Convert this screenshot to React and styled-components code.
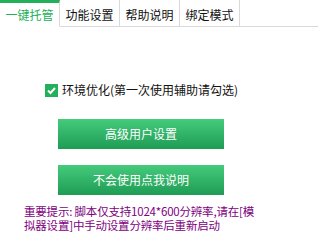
import React from "react";
import styled, { createGlobalStyle } from "styled-components";

const green = "#22b05a";
const line = "#d9d9d9";

const GlobalStyle = createGlobalStyle`
  body {
    margin: 0;
    background: #fff;
    font-family: "Noto Sans CJK SC", "Liberation Sans", sans-serif;
  }
`;

const Window = styled.div`
  width: 318px;
  height: 251px;
  background: #fff;
  overflow: hidden;
`;

const TabBar = styled.div`
  display: flex;
  height: 27px;
`;

const Tab = styled.div`
  box-sizing: border-box;
  width: 60px;
  height: 27px;
  display: flex;
  align-items: center;
  justify-content: center;
  padding-top: ${(p) => (p.active ? "1px" : "3px")};
  font-size: 12px;
  line-height: 12px;
  color: ${(p) => (p.active ? green : "#111")};
  border-top: ${(p) => (p.active ? `3px solid ${green}` : "none")};
  border-right: 1px solid ${line};
  border-bottom: 1px solid ${(p) => (p.active ? "#fff" : line)};
`;

const Filler = styled.div`
  flex: 1;
  border-bottom: 1px solid ${line};
`;

const Body = styled.div`
  display: flex;
  flex-direction: column;
  padding-top: 56px;
`;

const CheckRow = styled.label`
  display: flex;
  align-items: center;
  gap: 4px;
  padding-left: 45px;
  font-size: 12px;
  line-height: 14px;
  color: #111;
`;

const Box = styled.span`
  width: 13px;
  height: 13px;
  background: ${green};
  display: flex;
  align-items: center;
  justify-content: center;
`;

const Buttons = styled.div`
  display: flex;
  flex-direction: column;
  gap: 16px;
  padding-left: 58px;
  margin-top: 22px;
`;

const Button = styled.button`
  width: 166px;
  height: 30px;
  border: none;
  padding: 0;
  background: linear-gradient(#45cb7c, #1e9c54);
  color: #fff;
  font-family: "Noto Sans CJK SC", "Liberation Sans", sans-serif;
  font-size: 12px;
  line-height: 12px;
`;

const Notice = styled.div`
  margin-top: 9px;
  padding-left: 24px;
  color: #800080;
  font-size: 11.5px;
  letter-spacing: -0.2px;
`;

const NoticeLine = styled.div`
  line-height: 14px;
`;

export default function App() {
  const tabs = ["一键托管", "功能设置", "帮助说明", "绑定模式"];
  return (
    <Window>
      <GlobalStyle />
      <TabBar>
        {tabs.map((t, i) => (
          <Tab key={t} active={i === 0}>
            {t}
          </Tab>
        ))}
        <Filler />
      </TabBar>
      <Body>
        <CheckRow>
          <Box>
            <svg width="11" height="11" viewBox="0 0 11 11">
              <path d="M2 5.5 L4.5 8 L9 3" fill="none" stroke="#fff" strokeWidth="2" />
            </svg>
          </Box>
          环境优化(第一次使用辅助请勾选)
        </CheckRow>
        <Buttons>
          <Button>高级用户设置</Button>
          <Button>不会使用点我说明</Button>
        </Buttons>
        <Notice>
          <NoticeLine>重要提示: 脚本仅支持1024*600分辨率,请在[模</NoticeLine>
          <NoticeLine>拟器设置]中手动设置分辨率后重新启动</NoticeLine>
        </Notice>
      </Body>
    </Window>
  );
}
